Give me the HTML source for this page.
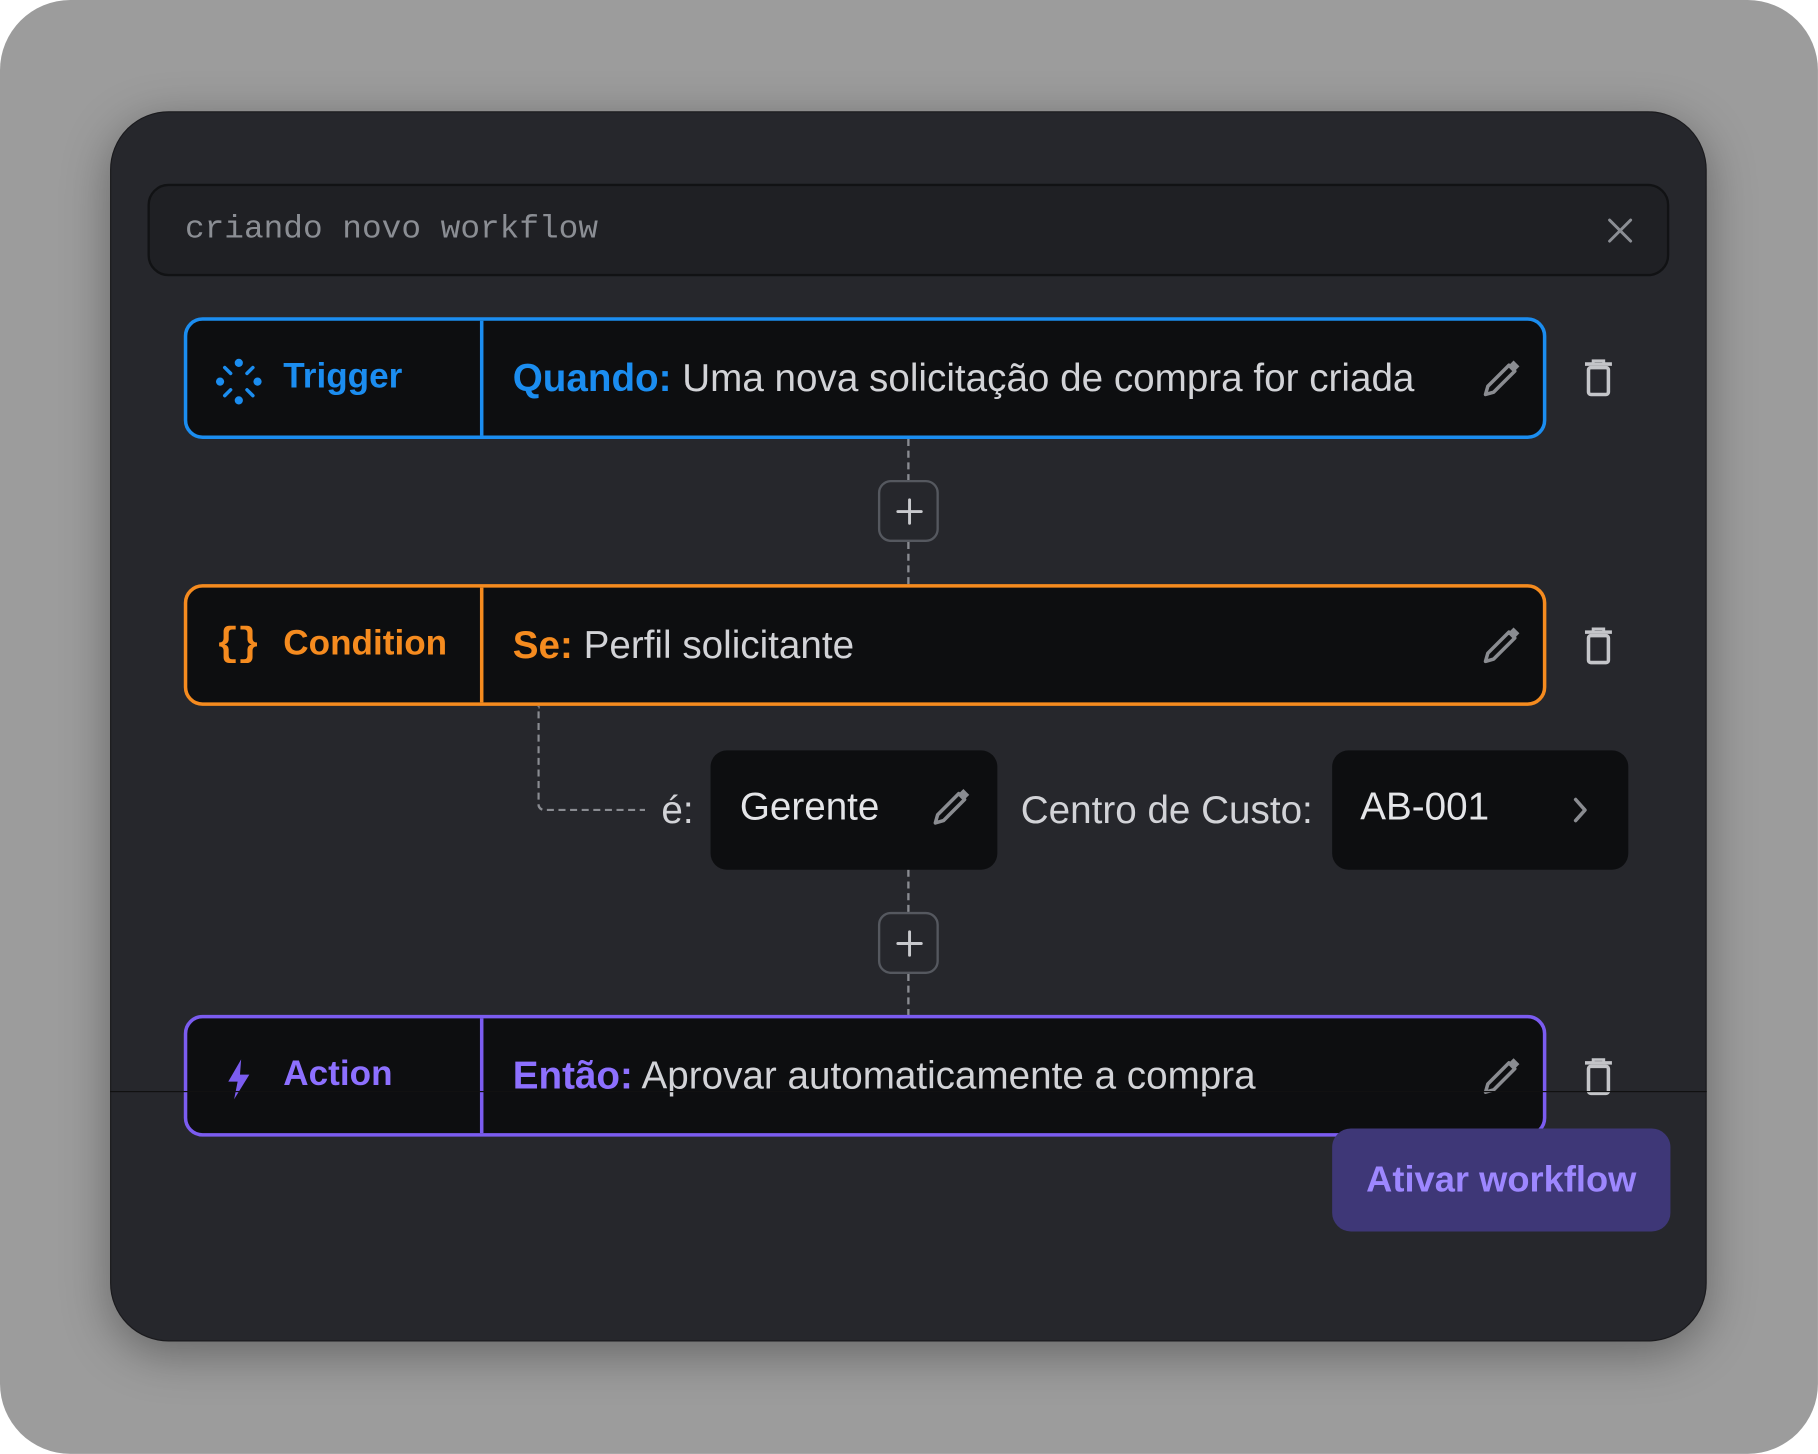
<!DOCTYPE html>
<html><head><meta charset="utf-8"><style>
html,body{margin:0;padding:0;background:#fff;width:1818px;height:1440px;overflow:hidden}
#s{position:absolute;left:0;top:0;width:1553px;height:1230px;transform:scale(1.1706);transform-origin:0 0;font-family:"Liberation Sans",sans-serif}
.a{position:absolute}
.bg{left:0;top:0;width:1553px;height:1242px;background:#9c9c9c;border-radius:60px}
.panel{left:94px;top:95px;width:1364px;height:1051px;background:#26272c;border-radius:50px;box-shadow:0 10px 40px rgba(0,0,0,.35);border:1px solid #1a1a1d;box-sizing:border-box}
.inp{left:126px;top:157px;width:1300px;height:79px;background:#1f2024;border:2px solid #111214;border-radius:18px;box-sizing:border-box}
.inp span{position:absolute;left:30px;top:22px;font-family:"Liberation Mono",monospace;font-size:28px;color:#8b8e94}
.row{left:157px;width:1164px;height:104px;background:#0d0e10;border:3px solid;border-radius:16px;box-sizing:border-box}
.row .div{position:absolute;left:250px;top:0;bottom:0;border-left:3px solid}
.lbl{position:absolute;left:82px;top:31px;font-size:30px;font-weight:700}
.txt{position:absolute;left:278px;top:30px;font-size:33px;color:#d2d3d7;white-space:nowrap}
.txt b{font-weight:700}
.ic{position:absolute}
.dot{border-left:2px dashed #8a8c92;width:0}
.plus{left:750px;width:52px;height:53px;border:2px solid #55585f;border-radius:11px;background:#26272c;box-sizing:border-box}
.box{background:#0d0e10;border-radius:14px;height:102px;top:641px}
.lt{font-size:33px;color:#d2d3d7;position:absolute}
</style></head><body><div id="s">
<div class="a bg"></div>
<div class="a panel"></div>
<div class="a inp"><span>criando novo workflow</span>
<svg class="ic" style="left:1245px;top:27px" width="22" height="22" viewBox="0 0 22 22"><path d="M2 2L20 20M20 2L2 20" stroke="#8b8e94" stroke-width="2.5" stroke-linecap="round"/></svg></div>

<div class="a dot" style="left:775px;top:375px;height:36px"></div>
<div class="a plus" style="top:410px"><svg style="position:absolute;left:13px;top:13px" width="24" height="24"><path d="M12 2V22M2 12H22" stroke="#c8c9cd" stroke-width="2.5" stroke-linecap="round"/></svg></div>
<div class="a dot" style="left:775px;top:463px;height:36px"></div>
<div class="a" style="left:459px;top:603px;width:90px;height:88px;border-left:2px dashed #8a8c92;border-bottom:2px dashed #8a8c92;border-bottom-left-radius:6px"></div>
<div class="a dot" style="left:775px;top:743px;height:36px"></div>
<div class="a plus" style="top:779px"><svg style="position:absolute;left:13px;top:13px" width="24" height="24"><path d="M12 2V22M2 12H22" stroke="#c8c9cd" stroke-width="2.5" stroke-linecap="round"/></svg></div>
<div class="a dot" style="left:775px;top:832px;height:36px"></div>

<div class="a row" style="top:271px;border-color:#1b8df0">
<div class="div" style="border-color:#1b8df0"></div>
<svg class="ic" style="left:24px;top:32px" width="40" height="40" viewBox="0 0 40 40" fill="#1b8df0" stroke="#1b8df0" stroke-width="3" stroke-linecap="round"><circle cx="20" cy="4" r="3.5" stroke="none"/><circle cx="20" cy="36" r="3.5" stroke="none"/><circle cx="4" cy="20" r="3.5" stroke="none"/><circle cx="36" cy="20" r="3.5" stroke="none"/><path d="M8 8L13 13M32 8L27 13M8 32L13 27M32 32L27 27"/></svg>
<div class="lbl" style="color:#1b8df0">Trigger</div>
<div class="txt"><b style="color:#1b8df0">Quando:</b> Uma nova solicitação de compra for criada</div>
<svg class="ic" style="left:1105px;top:33px" width="34" height="34" viewBox="0 0 34 34"><path d="M4 30L6 23L24 5L29 10L11 28Z" fill="none" stroke="#8a8c91" stroke-width="3" stroke-linejoin="round"/><path d="M24 5L28 1L33 6L29 10Z" fill="#8a8c91"/></svg>
</div>
<svg class="a" style="left:1353px;top:307px" width="25" height="32" viewBox="0 0 25 32"><path d="M1 4H24" stroke="#c4c5c9" stroke-width="3"/><path d="M8 4V1H17V4" fill="none" stroke="#c4c5c9" stroke-width="2.5"/><rect x="4" y="7" width="17" height="23" rx="2" fill="none" stroke="#c4c5c9" stroke-width="3"/></svg>

<div class="a row" style="top:499px;border-color:#f58b1f">
<div class="div" style="border-color:#f58b1f"></div>
<div class="ic" style="left:24px;top:30px;font-size:34px;font-weight:700;color:#f58b1f;font-family:'Liberation Mono',monospace;letter-spacing:-2px">{}</div>
<div class="lbl" style="color:#f58b1f">Condition</div>
<div class="txt"><b style="color:#f58b1f">Se:</b> Perfil solicitante</div>
<svg class="ic" style="left:1105px;top:33px" width="34" height="34" viewBox="0 0 34 34"><path d="M4 30L6 23L24 5L29 10L11 28Z" fill="none" stroke="#8a8c91" stroke-width="3" stroke-linejoin="round"/><path d="M24 5L28 1L33 6L29 10Z" fill="#8a8c91"/></svg>
</div>
<svg class="a" style="left:1353px;top:536px" width="25" height="32" viewBox="0 0 25 32"><path d="M1 4H24" stroke="#c4c5c9" stroke-width="3"/><path d="M8 4V1H17V4" fill="none" stroke="#c4c5c9" stroke-width="2.5"/><rect x="4" y="7" width="17" height="23" rx="2" fill="none" stroke="#c4c5c9" stroke-width="3"/></svg>

<div class="lt" style="left:565px;top:673px">é:</div>
<div class="a box" style="left:607px;width:245px"></div>
<div class="lt" style="left:632px;top:670px;color:#e4e5e8">Gerente</div>
<svg class="a" style="left:795px;top:673px" width="34" height="34" viewBox="0 0 34 34"><path d="M4 30L6 23L24 5L29 10L11 28Z" fill="none" stroke="#8a8c91" stroke-width="3" stroke-linejoin="round"/><path d="M24 5L28 1L33 6L29 10Z" fill="#8a8c91"/></svg>
<div class="lt" style="left:872px;top:673px">Centro de Custo:</div>
<div class="a box" style="left:1138px;width:253px"></div>
<div class="lt" style="left:1162px;top:670px;color:#e4e5e8">AB-001</div>
<svg class="a" style="left:1342px;top:680px" width="16" height="24" viewBox="0 0 16 24"><path d="M4 3L12 12L4 21" fill="none" stroke="#8a8c91" stroke-width="3" stroke-linecap="round" stroke-linejoin="round"/></svg>

<div class="a row" style="top:867px;border-color:#7b5cf0">
<div class="div" style="border-color:#7b5cf0"></div>
<svg class="ic" style="left:32px;top:34px" width="24" height="36" viewBox="0 0 24 36"><path d="M14 1L3 20H11L8 35L21 14H13Z" fill="#7b5cf0"/></svg>
<div class="lbl" style="color:#8d70ff">Action</div>
<div class="txt"><b style="color:#8d70ff">Então:</b> Aprovar automaticamente a compra</div>
<svg class="ic" style="left:1105px;top:33px" width="34" height="34" viewBox="0 0 34 34"><path d="M4 30L6 23L24 5L29 10L11 28Z" fill="none" stroke="#8a8c91" stroke-width="3" stroke-linejoin="round"/><path d="M24 5L28 1L33 6L29 10Z" fill="#8a8c91"/></svg>
</div>
<svg class="a" style="left:1353px;top:904px" width="25" height="32" viewBox="0 0 25 32"><path d="M1 4H24" stroke="#c4c5c9" stroke-width="3"/><path d="M8 4V1H17V4" fill="none" stroke="#c4c5c9" stroke-width="2.5"/><rect x="4" y="7" width="17" height="23" rx="2" fill="none" stroke="#c4c5c9" stroke-width="3"/></svg>
<div class="a" style="left:94px;top:932px;width:1364px;height:1px;background:#111"></div>

<div class="a" style="left:1138px;top:964px;width:289px;height:88px;background:#3e3777;border-radius:16px;color:#9d87ff;font-size:31px;font-weight:700;text-align:center;line-height:88px">Ativar workflow</div>
</div></body></html>
